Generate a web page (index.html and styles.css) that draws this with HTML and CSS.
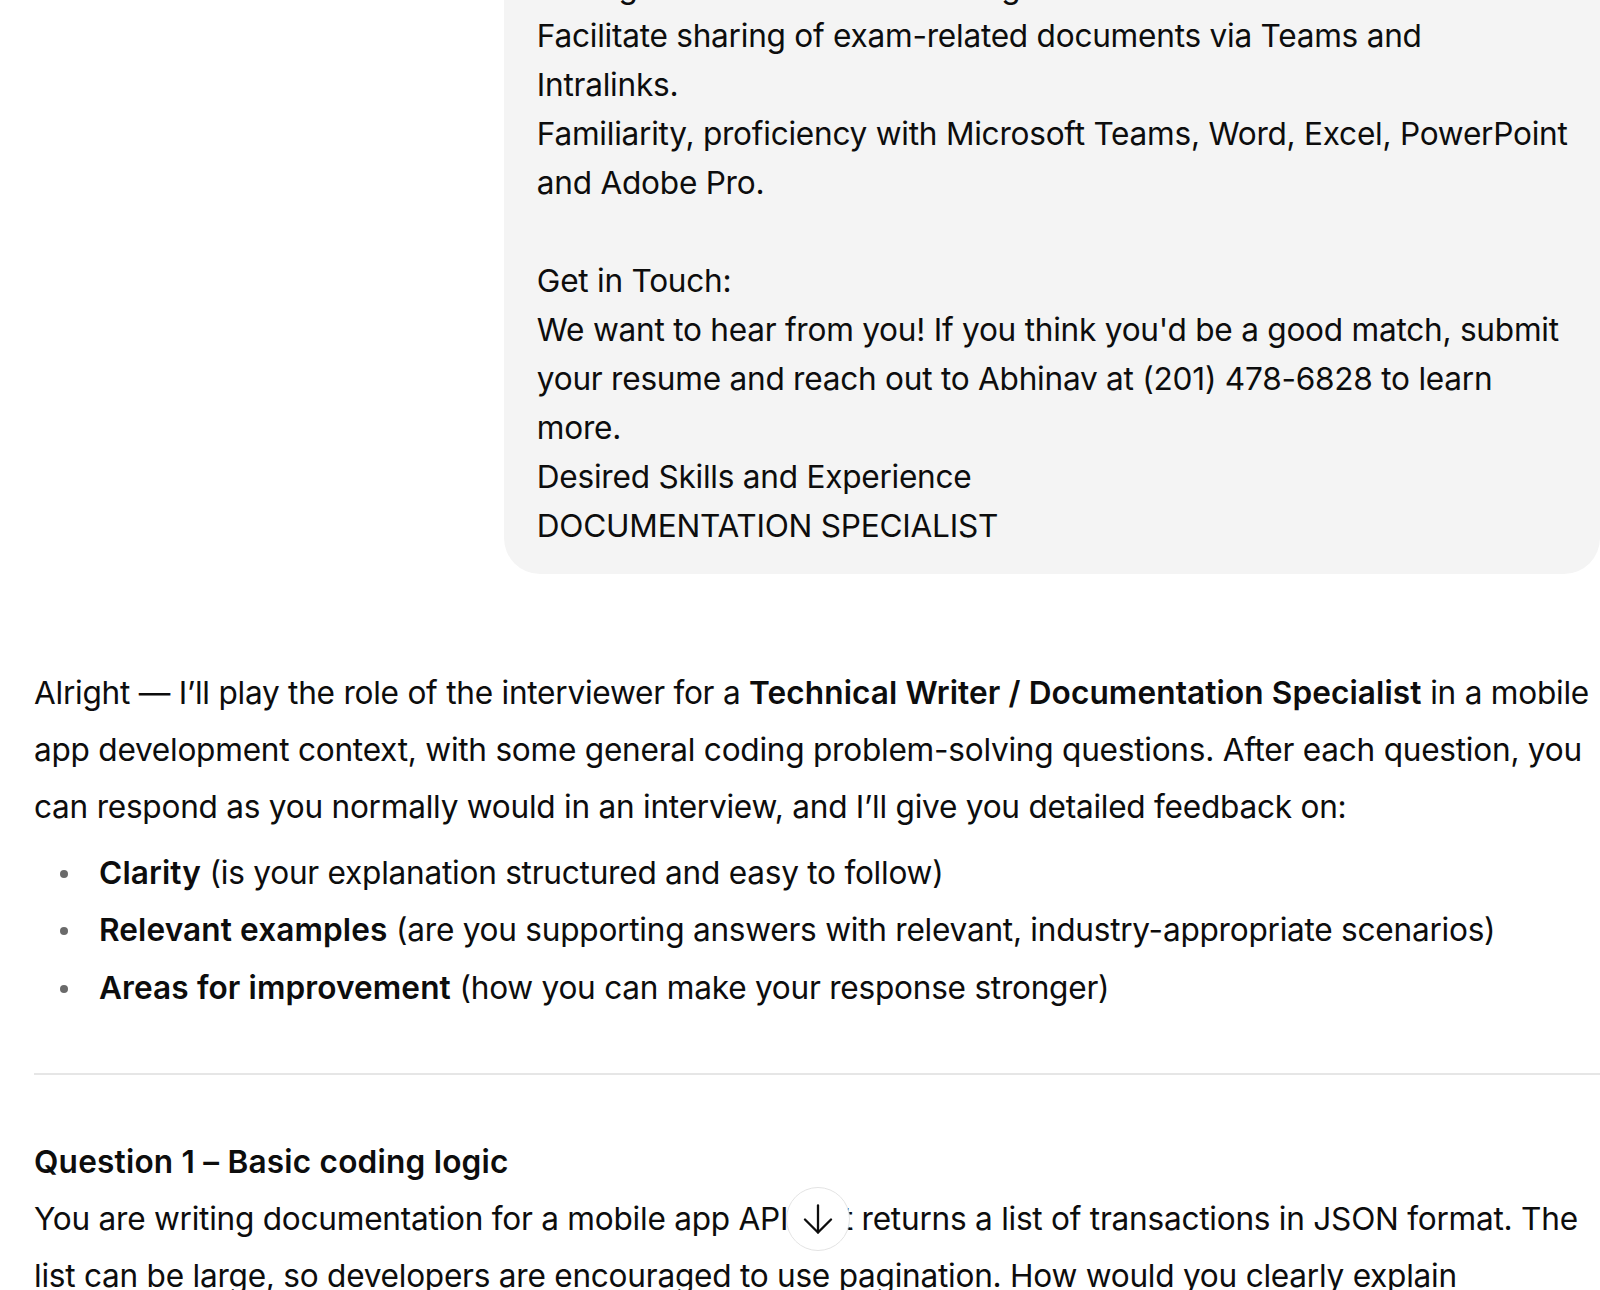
FILE: index.html
```html
<!DOCTYPE html>
<html lang="en">

<head>
    <meta charset="UTF-8" />
    <meta name="viewport" content="width=device-width, initial-scale=1.0" />
    <title>Chat</title>
    <link rel="stylesheet" href="styles.css">
</head>

<body>

    <div class="thread">

        <div class="user-row">
            <!-- lines kept as they wrap in the chat bubble -->
            <div class="bubble">Manage exam schedules and logistics.
Facilitate sharing of exam-related documents via Teams and
Intralinks.
Familiarity, proficiency with Microsoft Teams, Word, Excel, PowerPoint
and Adobe Pro.

Get in Touch:
We want to hear from you! If you think you'd be a good match, submit
your resume and reach out to Abhinav at (201) 478-6828 to learn
more.
Desired Skills and Experience
DOCUMENTATION SPECIALIST</div>
        </div>

        <div class="answer">
            <p>Alright — I’ll play the role of the interviewer for a <strong>Technical Writer / Documentation Specialist</strong> in a mobile app development context, with some general coding problem-solving questions. After each question, you can respond as you normally would in an interview, and I’ll give you detailed feedback on:</p>

            <ul>
                <li><strong>Clarity</strong> (is your explanation structured and easy to follow)</li>
                <li><strong>Relevant examples</strong> (are you supporting answers with relevant, industry-appropriate scenarios)</li>
                <li><strong>Areas for improvement</strong> (how you can make your response stronger)</li>
            </ul>

            <hr>

            <h3>Question 1 – Basic coding logic</h3>
            <p>You are writing documentation for a mobile app API that returns a list of transactions in JSON format. The list can be large, so developers are encouraged to use pagination. How would you clearly explain pagination to them?</p>
        </div>

    </div>

    <button class="scroll-down" aria-label="Scroll to bottom">
        <svg width="30" height="30" viewBox="0 0 30 30" fill="none" stroke="#0d0d0d" stroke-width="2.3" stroke-linecap="round" stroke-linejoin="round">
            <path d="M15 1.5v27" />
            <path d="M2 15.5l13 13 13-13" />
        </svg>
    </button>

</body>

</html>
```

FILE: styles.css
```css
body {
    margin: 0;
    background: #ffffff;
    color: #0d0d0d;
    font-family: Inter, "Noto Sans", sans-serif;
    font-size: 31.6px;
    letter-spacing: -0.25px;
    overflow: hidden;
}

.thread {
    margin-top: -58px;
    padding-left: 34px;
}

.user-row {
    display: flex;
    justify-content: flex-end;
}

.bubble {
    max-width: 70%;
    flex: 0 0 70%;
    box-sizing: border-box;
    background: #f4f4f4;
    border-radius: 36px;
    padding: 20px 33px 24px 33px;
    line-height: 49px;
    white-space: pre;
}

.answer {
    margin-top: 90px;
    line-height: 57px;
}

.answer p {
    margin: 0;
}

strong {
    font-weight: 600;
    letter-spacing: 0.1px;
}

ul {
    list-style: none;
    margin: 9px 0 0 0;
    padding-left: 65px;
}

li {
    position: relative;
    line-height: 57.3px;
}

/* grey dot bullet */
li::before {
    content: "";
    position: absolute;
    left: -39px;
    top: 26px;
    width: 8px;
    height: 8px;
    border-radius: 50%;
    background: #6a6a6a;
}

hr {
    border: none;
    border-top: 2px solid #e6e6e6;
    margin: 57px 0 58px 0;
}

h3 {
    margin: 0;
    font-size: 31.6px;
    font-weight: 600;
    letter-spacing: 0.2px;
    line-height: 57px;
}

.scroll-down {
    position: fixed;
    left: 786px;
    top: 1187px;
    width: 64px;
    height: 64px;
    border-radius: 50%;
    border: 1.5px solid #e3e3e3;
    background: #ffffff;
    display: flex;
    align-items: center;
    justify-content: center;
    padding: 0;
}
```
